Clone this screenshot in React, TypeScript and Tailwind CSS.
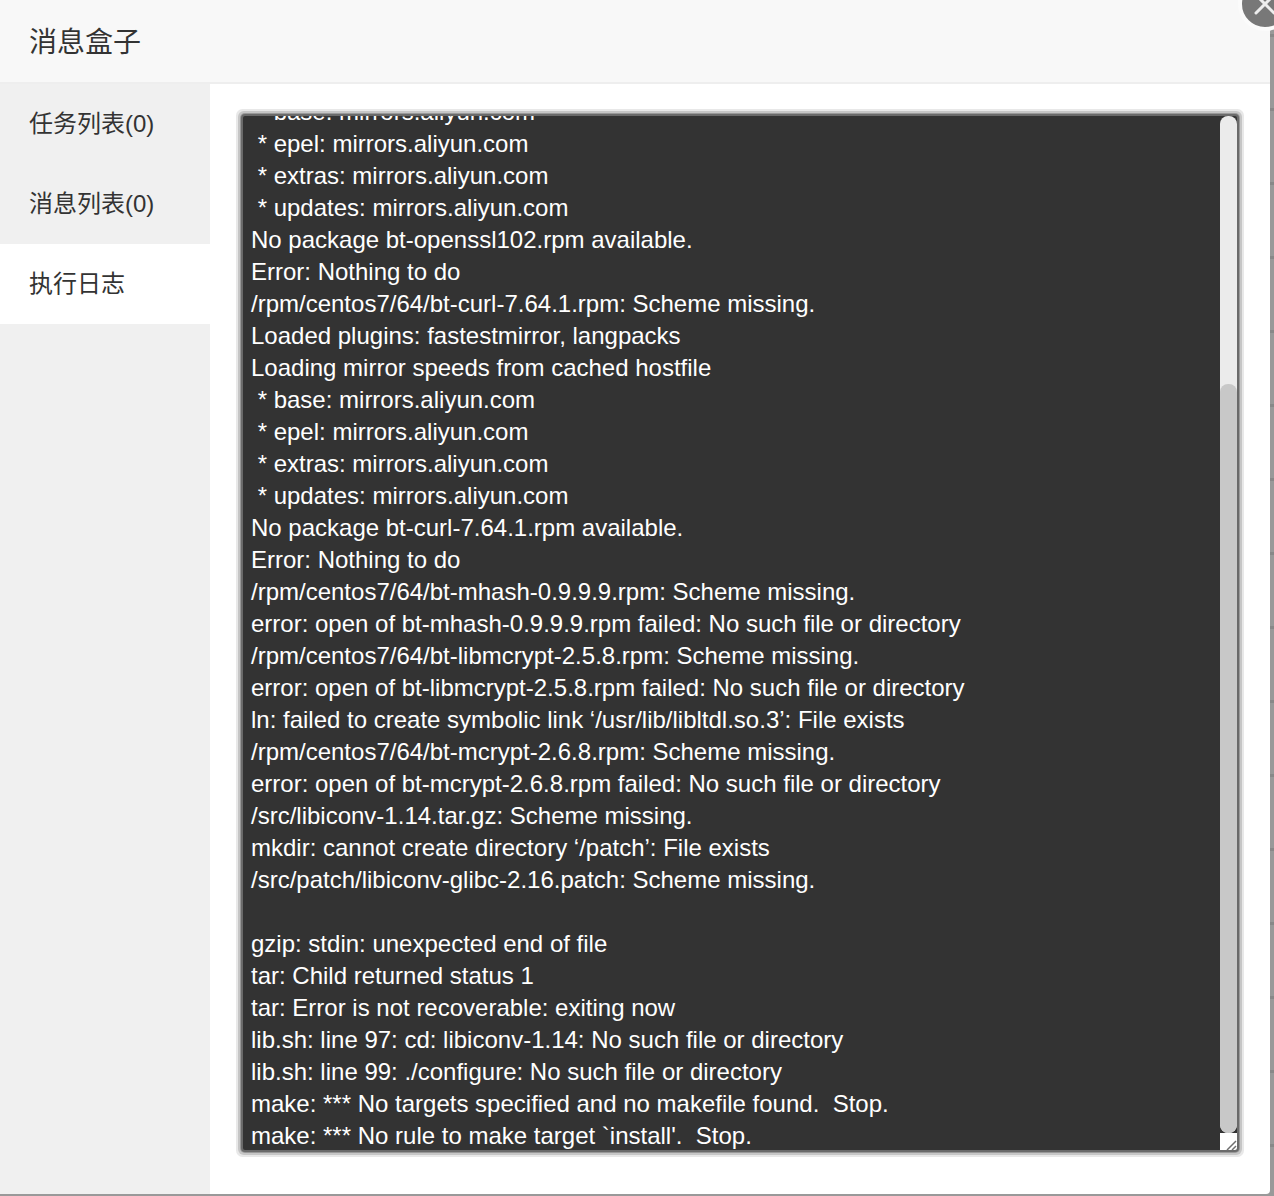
const LOG = ` * base: mirrors.aliyun.com
 * epel: mirrors.aliyun.com
 * extras: mirrors.aliyun.com
 * updates: mirrors.aliyun.com
No package bt-openssl102.rpm available.
Error: Nothing to do
/rpm/centos7/64/bt-curl-7.64.1.rpm: Scheme missing.
Loaded plugins: fastestmirror, langpacks
Loading mirror speeds from cached hostfile
 * base: mirrors.aliyun.com
 * epel: mirrors.aliyun.com
 * extras: mirrors.aliyun.com
 * updates: mirrors.aliyun.com
No package bt-curl-7.64.1.rpm available.
Error: Nothing to do
/rpm/centos7/64/bt-mhash-0.9.9.9.rpm: Scheme missing.
error: open of bt-mhash-0.9.9.9.rpm failed: No such file or directory
/rpm/centos7/64/bt-libmcrypt-2.5.8.rpm: Scheme missing.
error: open of bt-libmcrypt-2.5.8.rpm failed: No such file or directory
ln: failed to create symbolic link ‘/usr/lib/libltdl.so.3’: File exists
/rpm/centos7/64/bt-mcrypt-2.6.8.rpm: Scheme missing.
error: open of bt-mcrypt-2.6.8.rpm failed: No such file or directory
/src/libiconv-1.14.tar.gz: Scheme missing.
mkdir: cannot create directory ‘/patch’: File exists
/src/patch/libiconv-glibc-2.16.patch: Scheme missing.

gzip: stdin: unexpected end of file
tar: Child returned status 1
tar: Error is not recoverable: exiting now
lib.sh: line 97: cd: libiconv-1.14: No such file or directory
lib.sh: line 99: ./configure: No such file or directory
make: *** No targets specified and no makefile found.  Stop.
make: *** No rule to make target \`install'.  Stop.`;

const MARKS = Array.from({ length: 17 });

export default function App() {
  return (
    <div className="relative h-[1196px] w-[1274px] overflow-hidden bg-[#999999] font-['Liberation_Sans','Noto_Sans_CJK_SC',sans-serif] text-[#333333]">
      <div className="flex h-[1194px] w-full">
        <div className="flex h-full w-[1270px] flex-col overflow-hidden rounded-br-[4px] bg-white">
          <div className="flex h-[84px] shrink-0 items-center border-b-2 border-[#eeeeee] bg-[#f8f8f8] pl-[29px] pt-[4px] text-[28px]">
            消息盒子
          </div>
          <div className="flex min-h-0 flex-1">
            <div className="flex w-[210px] shrink-0 flex-col bg-[#f0f0f0] text-[24px]">
              <div className="flex h-[80px] items-center pl-[29px]">任务列表(0)</div>
              <div className="flex h-[80px] items-center pl-[29px]">消息列表(0)</div>
              <div className="flex h-[80px] items-center bg-white pl-[29px]">执行日志</div>
            </div>
            <div className="flex-1 pl-[33px] pr-[33px] pt-[32px]">
              <div className="flex h-[1034px] w-[994px] overflow-hidden rounded-[2px] bg-[#333333] text-[24px] leading-[32px] text-white shadow-[0_0_0_2px_#6a6a6a,0_0_0_3px_#999999,0_0_0_5px_#c6c6c6,0_0_0_7px_#e8e8e8]">
                <div className="min-w-0 flex-1 overflow-hidden pl-[8px]">
                  <div className="-mt-[20px] whitespace-pre">{LOG}</div>
                </div>
                <div className="flex w-[17px] shrink-0 flex-col">
                  <div className="flex h-[1017px] flex-col overflow-hidden rounded-[8px] bg-[#ebebeb] pt-[268px]">
                    <div className="h-[749px] rounded-[8px] bg-[#c8c8c8]" />
                  </div>
                  <div className="flex h-[17px] items-end justify-end bg-white">
                    <svg width="16" height="16" viewBox="0 0 16 16" fill="none" stroke="#6e6e6e" strokeWidth="1.5">
                      <path d="M6 16 L15 7" />
                      <path d="M11 16 L15 12" />
                    </svg>
                  </div>
                </div>
              </div>
            </div>
          </div>
        </div>
        <div className="-mt-[37px] flex w-[4px] shrink-0 flex-col">
          {MARKS.map((_, i) => (
            <div key={i} className="h-[74px] shrink-0 border-b-[3px] border-[#888888]" />
          ))}
        </div>
      </div>
      <div className="absolute left-[1238px] top-[-23px] flex h-[54px] w-[54px] items-center justify-center rounded-full border-4 border-[#fbfbfb] bg-[#787878]">
        <svg width="24" height="24" viewBox="0 0 24 24" fill="none" stroke="#ededed" strokeWidth="3" strokeLinecap="round">
          <path d="M3 3 L21 21" />
          <path d="M21 3 L3 21" />
        </svg>
      </div>
    </div>
  );
}
